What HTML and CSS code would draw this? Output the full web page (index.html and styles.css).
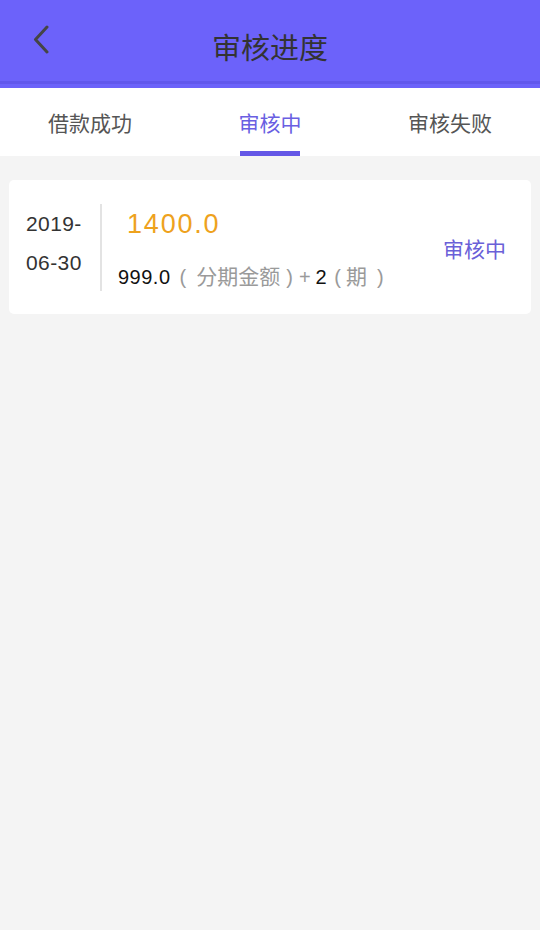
FILE: index.html
```html
<!DOCTYPE html>
<html lang="zh-CN">
<head>
<meta charset="utf-8">
<title>审核进度</title>
<link rel="stylesheet" href="styles.css">
</head>
<body>
<header class="header">
  <div class="header-left">
    <svg class="back" width="18" height="30" viewBox="0 0 18 30">
      <path d="M14 2 L2.5 14.5 L14 27" fill="none" stroke="#454545" stroke-width="3" stroke-linecap="round" stroke-linejoin="round"/>
    </svg>
  </div>
  <h1 class="title">审核进度</h1>
  <div class="header-right"></div>
</header>
<nav class="tabs">
  <div class="tab"><span class="tab-text">借款成功</span><span class="tab-bar"></span></div>
  <div class="tab active"><span class="tab-text">审核中</span><span class="tab-bar"></span></div>
  <div class="tab"><span class="tab-text">审核失败</span><span class="tab-bar"></span></div>
</nav>
<main class="content">
  <div class="card">
    <div class="date">2019-<br>06-30</div>
    <div class="info">
      <div class="amount">1400.0</div>
      <div class="detail"><span class="num">999.0</span><span class="muted g9">(</span><span class="muted cjk g10">分期金额</span><span class="muted g6">)</span><span class="muted g6">+</span><span class="num g5">2</span><span class="muted g7">(</span><span class="muted cjk g5">期</span><span class="muted g10">)</span></div>
    </div>
    <div class="status">审核中</div>
  </div>
</main>
</body>
</html>
```
FILE: styles.css
```css
* { box-sizing: border-box; }
html, body { margin: 0; padding: 0; }
body {
  width: 540px;
  min-height: 930px;
  background: #f4f4f4;
  font-family: "Liberation Sans", "Noto Sans CJK SC", sans-serif;
}
.header {
  height: 88px;
  display: grid;
  grid-template-columns: 90px 1fr 90px;
  background: linear-gradient(to bottom, #6c62fa 0, #6c62fa 81px, #6157ec 81px, #6157ec 84px, #6c62fa 84px);
}
.header-left { padding: 25px 0 0 33px; }
.back { display: block; }
.title {
  margin: 0;
  padding-top: 35px;
  text-align: center;
  font-size: 29px;
  line-height: 29px;
  font-weight: normal;
  color: #333333;
}
.tabs {
  height: 68px;
  display: grid;
  grid-template-columns: 1fr 1fr 1fr;
  background: #ffffff;
}
.tab {
  display: flex;
  flex-direction: column;
  align-items: center;
  padding-top: 25px;
}
.tab-text {
  font-size: 21px;
  line-height: 21px;
  color: #555555;
}
.tab-bar {
  margin-top: auto;
  width: 60px;
  height: 5px;
}
.tab.active .tab-text { color: #6a5fe2; }
.tab.active .tab-bar { background: #6457e6; }
.content { padding: 24px 9px 0; }
.card {
  background: #ffffff;
  border-radius: 5px;
  display: flex;
  align-items: center;
  padding: 24px 0 23px;
}
.date {
  align-self: flex-start;
  width: 91px;
  padding-left: 17px;
  font-size: 21px;
  line-height: 39px;
  letter-spacing: 0.4px;
  color: #333333;
}
.info {
  height: 87px;
  border-left: 2px solid #e3e3e3;
  padding: 3px 0 0 16px;
}
.amount {
  padding-left: 9px;
  font-size: 27px;
  line-height: 34px;
  letter-spacing: 1.8px;
  color: #eea21d;
}
.detail {
  margin-top: 24px;
  font-size: 20px;
  line-height: 24px;
  white-space: nowrap;
}
.detail span { display: inline-block; }
.num { color: #111111; letter-spacing: 0.5px; }
.muted { color: #9a9a9a; }
.cjk { font-size: 21px; }
.g5 { margin-left: 5px; }
.g6 { margin-left: 6px; }
.g7 { margin-left: 7px; }
.g9 { margin-left: 9px; }
.g10 { margin-left: 10px; }
.status {
  margin-left: auto;
  margin-top: 3px;
  padding-right: 25px;
  font-size: 21px;
  line-height: 21px;
  color: #6a60d8;
}
```
